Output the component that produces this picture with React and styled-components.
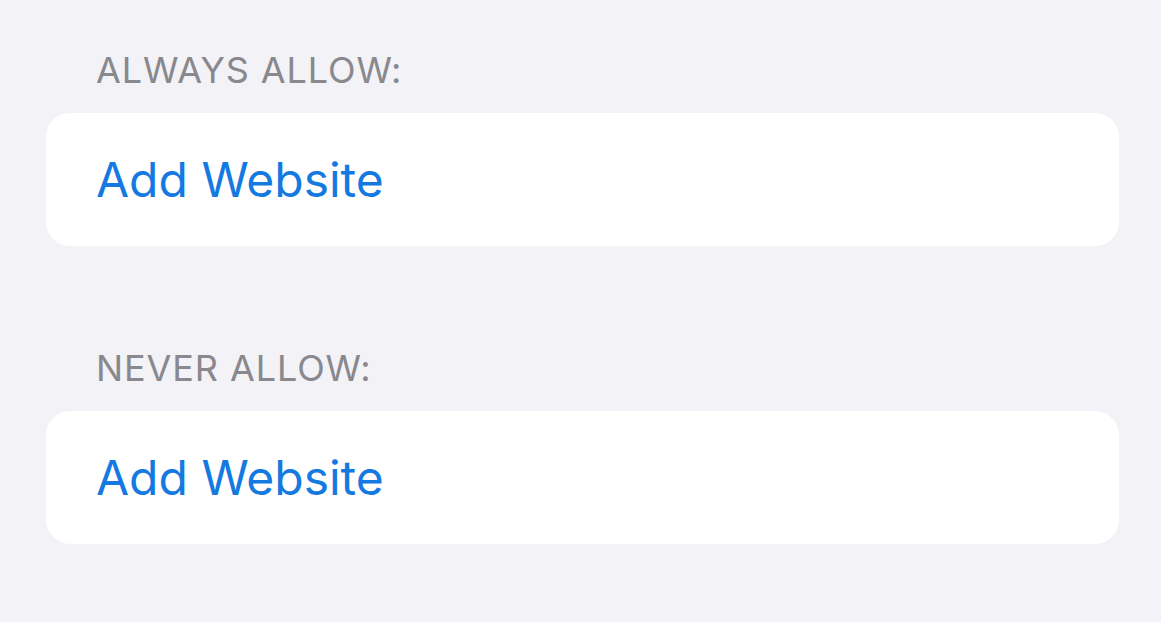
import React from 'react';
import styled, { createGlobalStyle } from 'styled-components';

const GlobalStyle = createGlobalStyle`
  html, body {
    margin: 0;
    padding: 0;
    background: #f2f2f7;
  }
  body {
    font-family: Inter, "Noto Sans", "Liberation Sans", sans-serif;
    -webkit-font-smoothing: antialiased;
  }
`

const Page = styled.div`
  width: 100%;
  min-height: 622px;
  box-sizing: border-box;
  padding: 50px 42px 0 46px;
  display: flex;
  flex-direction: column;
  background: #f2f2f7;
`

const Section = styled.section`
  display: flex;
  flex-direction: column;
  margin-bottom: ${props => props.gap || 0}px;
`

const SectionLabel = styled.div`
  height: 40px;
  line-height: 40px;
  padding-left: 50px;
  margin-bottom: 23px;
  font-size: 36px;
  font-weight: 400;
  letter-spacing: 0.9px;
  color: #88888d;
  text-transform: uppercase;
`

const Card = styled.div`
  height: 133px;
  border-radius: 24px;
  background: #ffffff;
  display: flex;
  align-items: center;
  padding-left: 50px;
`

const ActionButton = styled.button`
  border: none;
  background: none;
  padding: 0;
  font-family: inherit;
  font-size: 48px;
  font-weight: 400;
  color: #1479e0;
  cursor: pointer;
`

const sections = [
  { title: 'Always Allow:', gap: 102 },
  { title: 'Never Allow:', gap: 0 },
]

export default function App() {
  return (
    <>
      <GlobalStyle />
      <Page>
        {sections.map(s => (
          <Section key={s.title} gap={s.gap}>
            <SectionLabel>{s.title}</SectionLabel>
            <Card>
              <ActionButton>Add Website</ActionButton>
            </Card>
          </Section>
        ))}
      </Page>
    </>
  );
}
